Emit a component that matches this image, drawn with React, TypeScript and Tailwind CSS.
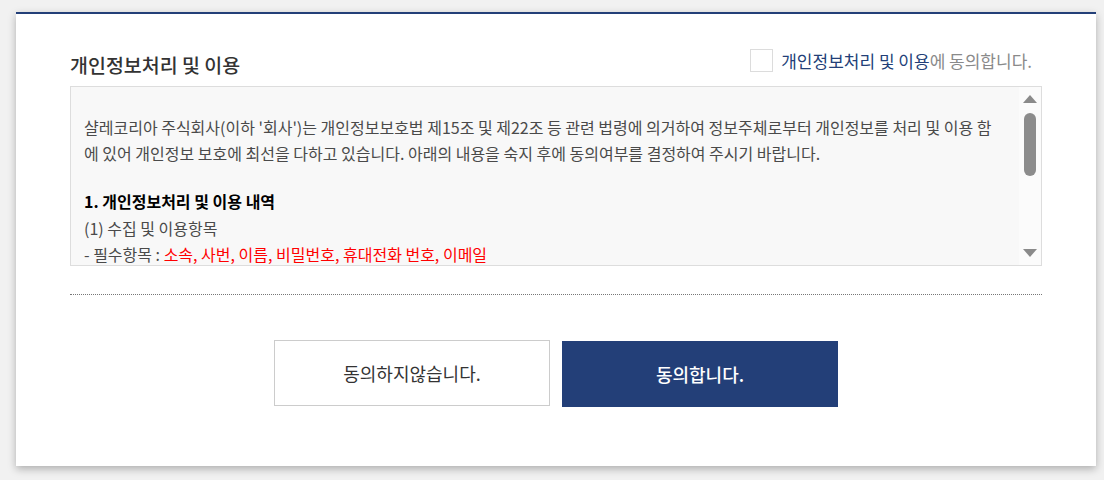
const font = "font-['Noto_Sans_CJK_KR','Noto_Sans',sans-serif]";

function ScrollBar() {
  return (
    <div className="w-[22px] shrink-0 flex flex-col items-center bg-[#fbfbfb]">
      <svg width="16" height="10" viewBox="0 0 16 10" className="mt-[7px]">
        <path d="M8 1 L15 9 L1 9 Z" fill="#8a8a8a" />
      </svg>
      <div className="mt-[9px] w-[12px] h-[63px] rounded-full bg-[#8c8c8c]" />
      <div className="flex-1" />
      <svg width="16" height="10" viewBox="0 0 16 10" className="mb-[7px]">
        <path d="M1 1 L15 1 L8 9 Z" fill="#8a8a8a" />
      </svg>
    </div>
  );
}

export default function App() {
  return (
    <div className={`${font} min-h-[480px] bg-[#f1f1f1] pt-[12px] pl-[16px] pr-[8px] pb-[14px]`}>
      <div className="w-[1080px] h-[454px] bg-white border-t-2 border-[#233f78] shadow-[0_3px_8px_rgba(0,0,0,0.28)] px-[54px] pt-[34px]">
        <div className="flex justify-between h-[38px]">
          <h2 className="mt-[4px] text-[19.5px] leading-[26px] font-medium text-[#333]">개인정보처리 및 이용</h2>
          <label className="flex items-center mt-[1px] h-[23px] mr-[10px] text-[17px]">
            <span className="w-[23px] h-[23px] border border-[#dcdcdc] bg-white mr-[8px]" />
            <span className="text-[#233f78]">개인정보처리 및 이용</span>
            <span className="text-[#8a8a8a]">에 동의합니다.</span>
          </label>
        </div>

        <div className="flex h-[180px] border border-[#dddddd] bg-[#f8f8f8] overflow-hidden">
          <div className="flex-1 pl-[13px] pt-[27px] text-[16px] leading-[26px] text-[#4a4a4a] whitespace-nowrap">
            <p>샬레코리아 주식회사(이하 '회사')는 개인정보보호법 제15조 및 제22조 등 관련 법령에 의거하여 정보주체로부터 개인정보를 처리 및 이용 함</p>
            <p>에 있어 개인정보 보호에 최선을 다하고 있습니다. 아래의 내용을 숙지 후에 동의여부를 결정하여 주시기 바랍니다.</p>
            <p className="mt-[22px] leading-[27px] font-bold text-black">1. 개인정보처리 및 이용 내역</p>
            <p>(1) 수집 및 이용항목</p>
            <p>
              - 필수항목 : <span className="text-[#ff0000]">소속, 사번, 이름, 비밀번호, 휴대전화 번호, 이메일</span>
            </p>
          </div>
          <ScrollBar />
        </div>

        <div className="mt-[28px] border-t border-dotted border-[#777]" />

        <div className="mt-[45px] flex justify-center gap-[12px]">
          <button className="w-[276px] h-[66px] border border-[#cccccc] bg-white text-[18px] text-[#333]">
            동의하지않습니다.
          </button>
          <button className="w-[276px] h-[66px] mt-[1px] bg-[#233f78] text-[18px] font-medium text-white">
            동의합니다.
          </button>
        </div>
      </div>
    </div>
  );
}
